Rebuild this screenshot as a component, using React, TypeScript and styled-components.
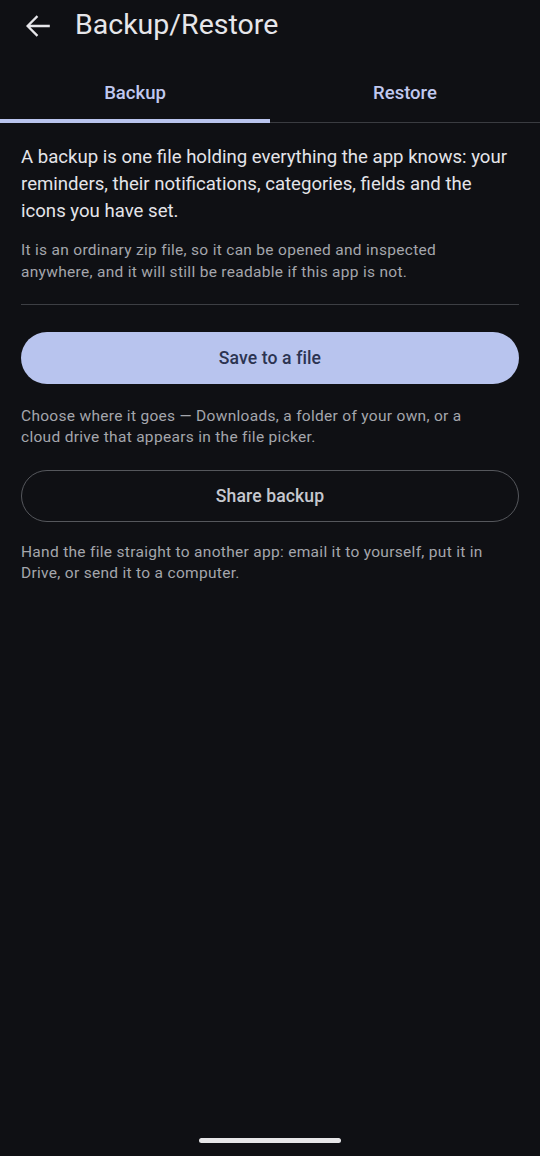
import React, { useState } from "react";
import styled, { createGlobalStyle } from "styled-components";

const GlobalStyle = createGlobalStyle`
  html, body {
    margin: 0;
    padding: 0;
    background: #0f1014;
  }
  body {
    font-family: Roboto, "Noto Sans", "Liberation Sans", sans-serif;
    color: #e4e4e9;
    -webkit-font-smoothing: antialiased;
  }
  * { box-sizing: border-box; }
`;

const Screen = styled.div`
  width: 540px;
  min-height: 1156px;
  background: #0f1014;
  display: flex;
  flex-direction: column;
`;

const AppBar = styled.header`
  height: 48px;
  display: flex;
  align-items: center;
  padding-left: 22px;
  gap: 21px;
`;

const IconButton = styled.button`
  width: 32px;
  height: 32px;
  padding: 0;
  border: none;
  background: none;
  color: #e6e6ea;
  display: flex;
  align-items: center;
  justify-content: center;
  margin-top: 3px;
`;

const Title = styled.h1`
  margin: 0;
  font-size: 28.5px;
  font-weight: 400;
  color: #e6e6ea;
  letter-spacing: 0;
`;

const TabRow = styled.nav`
  margin-top: 12px;
  display: grid;
  grid-template-columns: 1fr 1fr;
  border-bottom: 1px solid #3a3c41;
`;

const Tab = styled.button<{ $active?: boolean }>`
  position: relative;
  height: 62px;
  border: none;
  background: none;
  padding: 3px 0 0;
  font-family: inherit;
  font-size: 18.5px;
  font-weight: 500;
  color: #c0c8ef;
  display: flex;
  align-items: center;
  justify-content: center;

  &::after {
    content: "";
    position: absolute;
    left: 0;
    right: 0;
    bottom: -1px;
    height: 4px;
    background: ${(p) => (p.$active ? "#b9c4ee" : "transparent")};
  }
`;

const Content = styled.main`
  padding: 21px 21px 0;
  display: flex;
  flex-direction: column;
`;

const Lead = styled.p`
  margin: 0;
  font-size: 18.6px;
  line-height: 27px;
  color: #e4e4e9;
  white-space: nowrap;
`;

const Note = styled.p<{ $gap?: number }>`
  margin: ${(p) => p.$gap ?? 0}px 0 0;
  font-size: 15.5px;
  line-height: 21.5px;
  letter-spacing: 0.3px;
  color: #a4a6ac;
  white-space: nowrap;
`;

const Divider = styled.hr`
  margin: 21px 0 0;
  border: none;
  height: 1px;
  background: #3d3f44;
`;

const PillButton = styled.button<{ $filled?: boolean; $gap: number }>`
  margin-top: ${(p) => p.$gap}px;
  height: 52px;
  width: 100%;
  border-radius: 26px;
  font-family: inherit;
  font-size: 17.6px;
  font-weight: 500;
  letter-spacing: 0.1px;
  border: ${(p) => (p.$filled ? "none" : "1.5px solid #55575c")};
  background: ${(p) => (p.$filled ? "#b8c4ee" : "transparent")};
  color: ${(p) => (p.$filled ? "#2c3452" : "#c6c8cf")};
`;

const HomeIndicator = styled.div`
  position: fixed;
  left: 199px;
  top: 1138px;
  width: 142px;
  height: 5px;
  border-radius: 3px;
  background: #e6e6e8;
`;

function ArrowBack() {
  return (
    <svg width="32" height="32" viewBox="0 0 24 24" fill="none">
      <path
        d="M20 12H4.8M11 5.2L4.2 12L11 18.8"
        stroke="currentColor"
        strokeWidth="1.7"
        strokeLinecap="square"
      />
    </svg>
  );
}

export default function App() {
  const [tab, setTab] = useState<"backup" | "restore">("backup");
  return (
    <>
      <GlobalStyle />
      <Screen>
        <AppBar>
          <IconButton aria-label="Back">
            <ArrowBack />
          </IconButton>
          <Title>Backup/Restore</Title>
        </AppBar>
        <TabRow>
          <Tab $active={tab === "backup"} onClick={() => setTab("backup")}>
            Backup
          </Tab>
          <Tab $active={tab === "restore"} onClick={() => setTab("restore")}>
            Restore
          </Tab>
        </TabRow>
        <Content>
          <Lead>
            A backup is one file holding everything the app knows: your
            <br />
            reminders, their notifications, categories, fields and the
            <br />
            icons you have set.
          </Lead>
          <Note $gap={15}>
            It is an ordinary zip file, so it can be opened and inspected
            <br />
            anywhere, and it will still be readable if this app is not.
          </Note>
          <Divider />
          <PillButton $filled $gap={27}>
            Save to a file
          </PillButton>
          <Note $gap={21.5}>
            Choose where it goes — Downloads, a folder of your own, or a
            <br />
            cloud drive that appears in the file picker.
          </Note>
          <PillButton $gap={21.5}>Share backup</PillButton>
          <Note $gap={19.5}>
            Hand the file straight to another app: email it to yourself, put it
            in
            <br />
            Drive, or send it to a computer.
          </Note>
        </Content>
        <HomeIndicator />
      </Screen>
    </>
  );
}
